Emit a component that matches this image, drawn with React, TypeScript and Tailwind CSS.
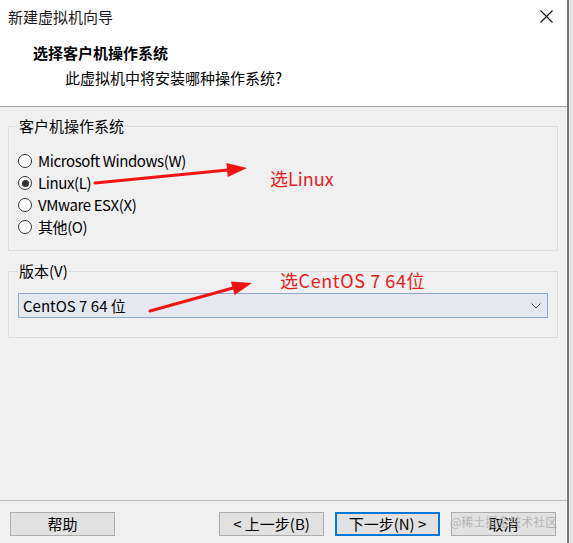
import React from "react";

const font = { fontFamily: '"Noto Sans CJK SC", "Noto Sans", sans-serif' };

function Radio({ checked, label }: { checked?: boolean; label: string }) {
  return (
    <div className="flex h-[22px] items-center gap-[6px]">
      <span className="flex h-[14px] w-[14px] items-center justify-center rounded-full border border-[#333333] bg-white">
        {checked && <span className="h-[7px] w-[7px] rounded-full bg-[#333333]" />}
      </span>
      <span className="text-[15px] leading-[20px] tracking-[-0.4px] text-black">{label}</span>
    </div>
  );
}

function Btn({ label, primary }: { label: string; primary?: boolean }) {
  return (
    <div
      className={
        "flex h-[24px] w-[105px] items-center justify-center bg-[#e1e1e1] text-[15px] leading-[20px] text-black " +
        (primary ? "border-2 border-[#0078d7]" : "border border-[#adadad]")
      }
    >
      {label}
    </div>
  );
}

export default function App() {
  return (
    <div className="relative flex h-[543px] w-[573px] overflow-hidden bg-[#e6e6e6]" style={font}>
      <div className="flex h-full w-[569px] flex-col border-r-2 border-[#7a7a7a] bg-[#f0f0f0]">
        {/* title bar */}
        <div className="flex h-[33px] items-center justify-between bg-white pl-[8px] pr-[14px]">
          <span className="text-[15px] leading-[20px] text-[#1a1a1a]">新建虚拟机向导</span>
          <svg width="13" height="13" viewBox="0 0 13 13">
            <path d="M0.5 0.5 L12.5 12.5 M12.5 0.5 L0.5 12.5" stroke="#111" strokeWidth="1.1" />
          </svg>
        </div>
        {/* header */}
        <div className="flex h-[74px] flex-col border-b border-[#a0a0a0] bg-white pt-[10px]">
          <div className="pl-[33px] text-[15px] font-bold leading-[20px] text-black">选择客户机操作系统</div>
          <div className="mt-[5px] pl-[65px] text-[15px] leading-[20px] text-black">此虚拟机中将安装哪种操作系统?</div>
        </div>
        {/* body */}
        <div className="flex flex-1 flex-col">
          <fieldset className="ml-[8px] mt-[9px] w-[550px] border border-[#dcdcdc] px-[9px] pb-[12px]">
            <legend className="px-[1px] text-[15px] leading-[20px] text-black">客户机操作系统</legend>
            <div className="flex flex-col pt-[14px]">
              <Radio label="Microsoft Windows(W)" />
              <Radio label="Linux(L)" checked />
              <Radio label="VMware ESX(X)" />
              <Radio label="其他(O)" />
            </div>
          </fieldset>
          <fieldset className="ml-[8px] mt-[10px] w-[550px] border border-[#dcdcdc] px-[9px] pb-[19px]">
            <legend className="px-[1px] text-[15px] leading-[20px] text-black">版本(V)</legend>
            <div className="mt-[12px] flex h-[25px] items-center justify-between border border-[#8fa9cc] bg-[#e5e9ef] pl-[4px] pr-[6px]">
              <span className="text-[15px] leading-[20px] text-black">CentOS 7 64 位</span>
              <svg width="10" height="6" viewBox="0 0 10 6">
                <path d="M0.5 0.5 L5 5 L9.5 0.5" fill="none" stroke="#444" strokeWidth="1" />
              </svg>
            </div>
          </fieldset>
          <div className="flex-1" />
          <div className="h-px bg-[#b9b9b9]" />
          <div className="flex h-[42px] items-start justify-between pl-[10px] pr-[11px] pt-[11px]">
            <Btn label="帮助" />
            <div className="flex gap-[11px]">
              <Btn label="< 上一步(B)" />
              <Btn label="下一步(N) >" primary />
              <Btn label="取消" />
            </div>
          </div>
        </div>
      </div>

      {/* annotations */}
      <svg className="pointer-events-none absolute left-0 top-0" width="573" height="543" viewBox="0 0 573 543">
        <line x1="95" y1="183" x2="228" y2="170" stroke="#f01414" strokeWidth="3" strokeLinecap="round" />
        <polygon points="247,168 227.8,177 226.4,163" fill="#f01414" />
        <line x1="150" y1="311" x2="233" y2="288" stroke="#f01414" strokeWidth="3" strokeLinecap="round" />
        <polygon points="252,283 234.6,295.1 230.9,281.6" fill="#f01414" />
      </svg>
      <div className="absolute left-[270px] top-[166px] text-[18px] leading-[24px] text-[#e81c1c]">选Linux</div>
      <div className="absolute left-[280px] top-[268px] text-[18px] leading-[24px] tracking-[0.6px] text-[#e81c1c]">选CentOS 7 64位</div>
      <div className="pointer-events-none absolute left-[450px] top-[513px] text-[12px] leading-[18px] text-[#a8a8a8]/80">
        @稀土掘金技术社区
      </div>
    </div>
  );
}
